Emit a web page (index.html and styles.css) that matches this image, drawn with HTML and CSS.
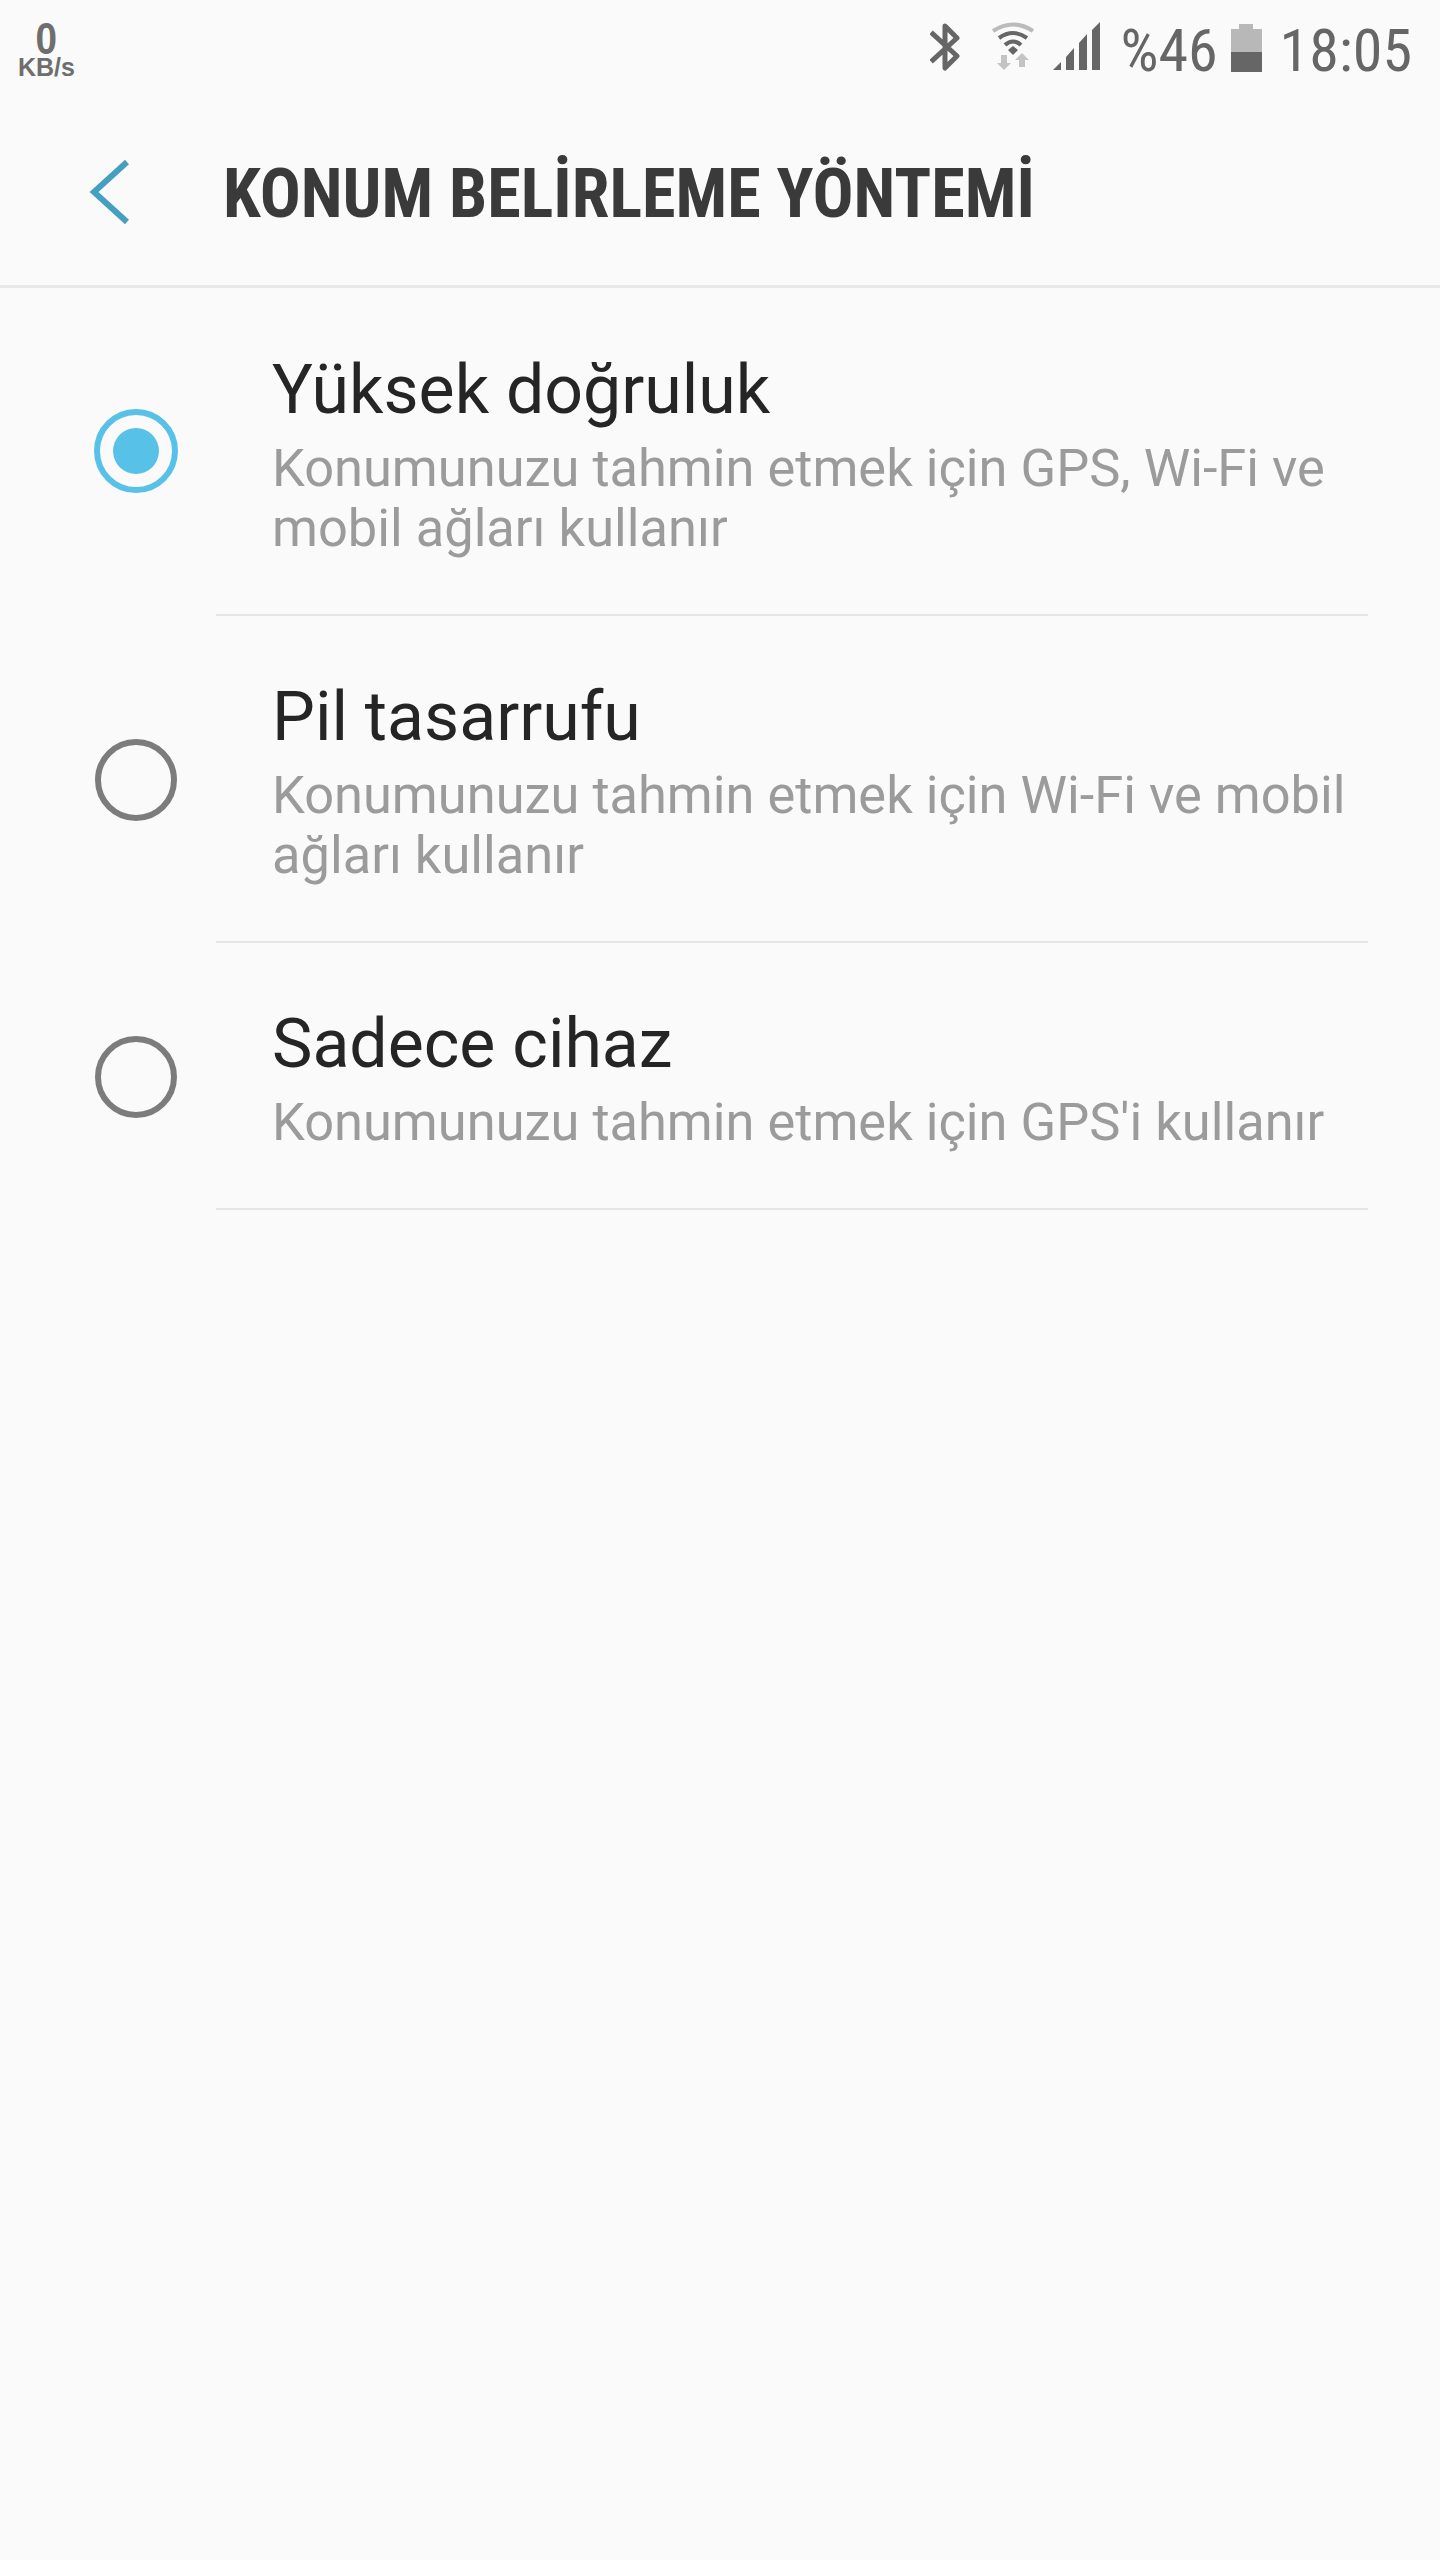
FILE: index.html
```html
<!DOCTYPE html>
<html lang="tr">
<head>
<meta charset="UTF-8" />
<title>Konum belirleme yöntemi</title>
<link rel="stylesheet" href="styles.css">
</head>
<body>

<div class="statusbar">
  <div class="netspeed">
    <span class="netspeed-num">0</span>
    <span class="netspeed-unit">KB/s</span>
  </div>
  <div class="status-right">
    <svg class="ic-bt" width="32" height="52" viewBox="0 0 32 52">
      <path d="M3 13 L27 35 L15 47 V5 L27 17 L3 39" fill="none" stroke="#666" stroke-width="5" stroke-linejoin="round" stroke-linecap="square"/>
    </svg>
    <svg class="ic-wifi" width="44" height="52" viewBox="0 0 44 52">
      <path d="M2 10 Q22 -3 42 10" fill="none" stroke="#bbb" stroke-width="4"/>
      <path d="M8 17 Q22 7 36 17" fill="none" stroke="#666" stroke-width="4"/>
      <path d="M14 24 Q22 17 30 24" fill="none" stroke="#666" stroke-width="4"/>
      <path d="M17 29 L22 25 L27 29 L22 34 Z" fill="#666"/>
      <path d="M10 34 H16 V42 H20 L13 49 L6 42 H10 Z" fill="#c4c4c4"/>
      <path d="M31 32 L38 39 H34 V46 H28 V39 H24 Z" fill="#c4c4c4"/>
    </svg>
    <svg class="ic-signal" width="48" height="50" viewBox="0 0 48 50">
      <path d="M0 49 L8 41 V49 Z M13 36 L21 27 V49 H13 Z M26 22 L34 13 V49 H26 Z M39 9 L47 1 V49 H39 Z" fill="#666"/>
    </svg>
    <span class="status-text battery-pct">%46</span>
    <div class="battery">
      <div class="battery-cap"></div>
      <div class="battery-body">
        <div class="battery-level"></div>
      </div>
    </div>
    <span class="status-text clock">18:05</span>
  </div>
</div>

<div class="toolbar">
  <svg class="back" width="40" height="64" viewBox="0 0 40 64">
    <path d="M38 2 L5 32 L38 62" fill="none" stroke="#459fc0" stroke-width="6"/>
  </svg>
  <h1 class="title">KONUM BELİRLEME YÖNTEMİ</h1>
</div>

<div class="list">
  <div class="row">
    <div class="radio radio-on"><div class="radio-dot"></div></div>
    <div class="row-body">
      <div class="row-title">Yüksek doğruluk</div>
      <div class="row-sub">Konumunuzu tahmin etmek için GPS, Wi-Fi ve<br>mobil ağları kullanır</div>
    </div>
  </div>
  <div class="row">
    <div class="radio"></div>
    <div class="row-body">
      <div class="row-title">Pil tasarrufu</div>
      <div class="row-sub">Konumunuzu tahmin etmek için Wi-Fi ve mobil<br>ağları kullanır</div>
    </div>
  </div>
  <div class="row">
    <div class="radio"></div>
    <div class="row-body">
      <div class="row-title">Sadece cihaz</div>
      <div class="row-sub">Konumunuzu tahmin etmek için GPS'i kullanır</div>
    </div>
  </div>
</div>

</body>
</html>
```

FILE: styles.css
```css
body {
  margin: 0;
  height: 2560px;
  background: #fafafa;
  font-family: Roboto, "Liberation Sans", sans-serif;
  overflow: hidden;
}

/* status bar */
.statusbar {
  height: 96px;
  display: flex;
  justify-content: space-between;
  padding: 0 28px 0 18px;
}
.netspeed {
  display: flex;
  flex-direction: column;
  align-items: center;
  padding-top: 21px;
  color: #6e6e6e;
  font-family: "Liberation Sans", sans-serif;
  font-weight: bold;
}
.netspeed-num {
  font-size: 44px;
  line-height: 35px;
  transform: scaleX(0.88);
}
.netspeed-unit {
  font-size: 25px;
  line-height: 22px;
}
.status-right {
  display: flex;
  align-items: flex-start;
  padding-top: 21px;
}
.ic-bt { margin-right: 29px; }
.ic-wifi { margin-right: 18px; }
.ic-signal { margin-right: 20px; }
.status-text {
  color: #666;
  font-size: 60px;
  line-height: 60px;
  font-stretch: condensed;
  display: inline-block;
}
.battery-pct {
  width: 100px;
  margin-right: 10px;
}
.battery {
  width: 31px;
  display: flex;
  flex-direction: column;
  align-items: center;
  margin-right: 18px;
  margin-top: 3px;
}
.battery-cap {
  width: 14px;
  height: 5px;
  background: #b8b8b8;
}
.battery-body {
  width: 31px;
  height: 43px;
  background: #b8b8b8;
  display: flex;
  align-items: flex-end;
}
.battery-level {
  width: 100%;
  height: 20px;
  background: #666;
}

/* toolbar */
.toolbar {
  height: 189px;
  display: flex;
  align-items: center;
  border-bottom: 3px solid #e8e8e8;
}
.back {
  margin: 3px 94px 0 89px;
}
.title {
  margin: 6px 0 0;
  font-size: 68.2px;
  font-weight: 700;
  font-stretch: condensed;
  color: #3a3a3a;
  white-space: nowrap;
}

/* list */
.list {
  margin-top: 1px;
}
.row {
  display: flex;
  align-items: center;
  position: relative;
}
.row::after {
  content: "";
  position: absolute;
  left: 216px;
  right: 72px;
  bottom: 0;
  height: 2px;
  background: #e6e6e6;
}
.row-body {
  padding: 54px 0 58px;
}
.row-title {
  font-size: 68px;
  line-height: 95px;
  color: #252525;
}
.row-sub {
  font-size: 52.4px;
  line-height: 60px;
  color: #9b9b9b;
}
.radio {
  width: 82px;
  height: 82px;
  box-sizing: border-box;
  margin: 0 95px;
  border: 6px solid #7c7c7c;
  border-radius: 50%;
  display: flex;
  align-items: center;
  justify-content: center;
}
.radio-on {
  width: 84px;
  height: 84px;
  margin: 0 94px 3px;
  border-color: #58c1e8;
}
.radio-dot {
  width: 46px;
  height: 46px;
  border-radius: 50%;
  background: #58c1e8;
}
```
